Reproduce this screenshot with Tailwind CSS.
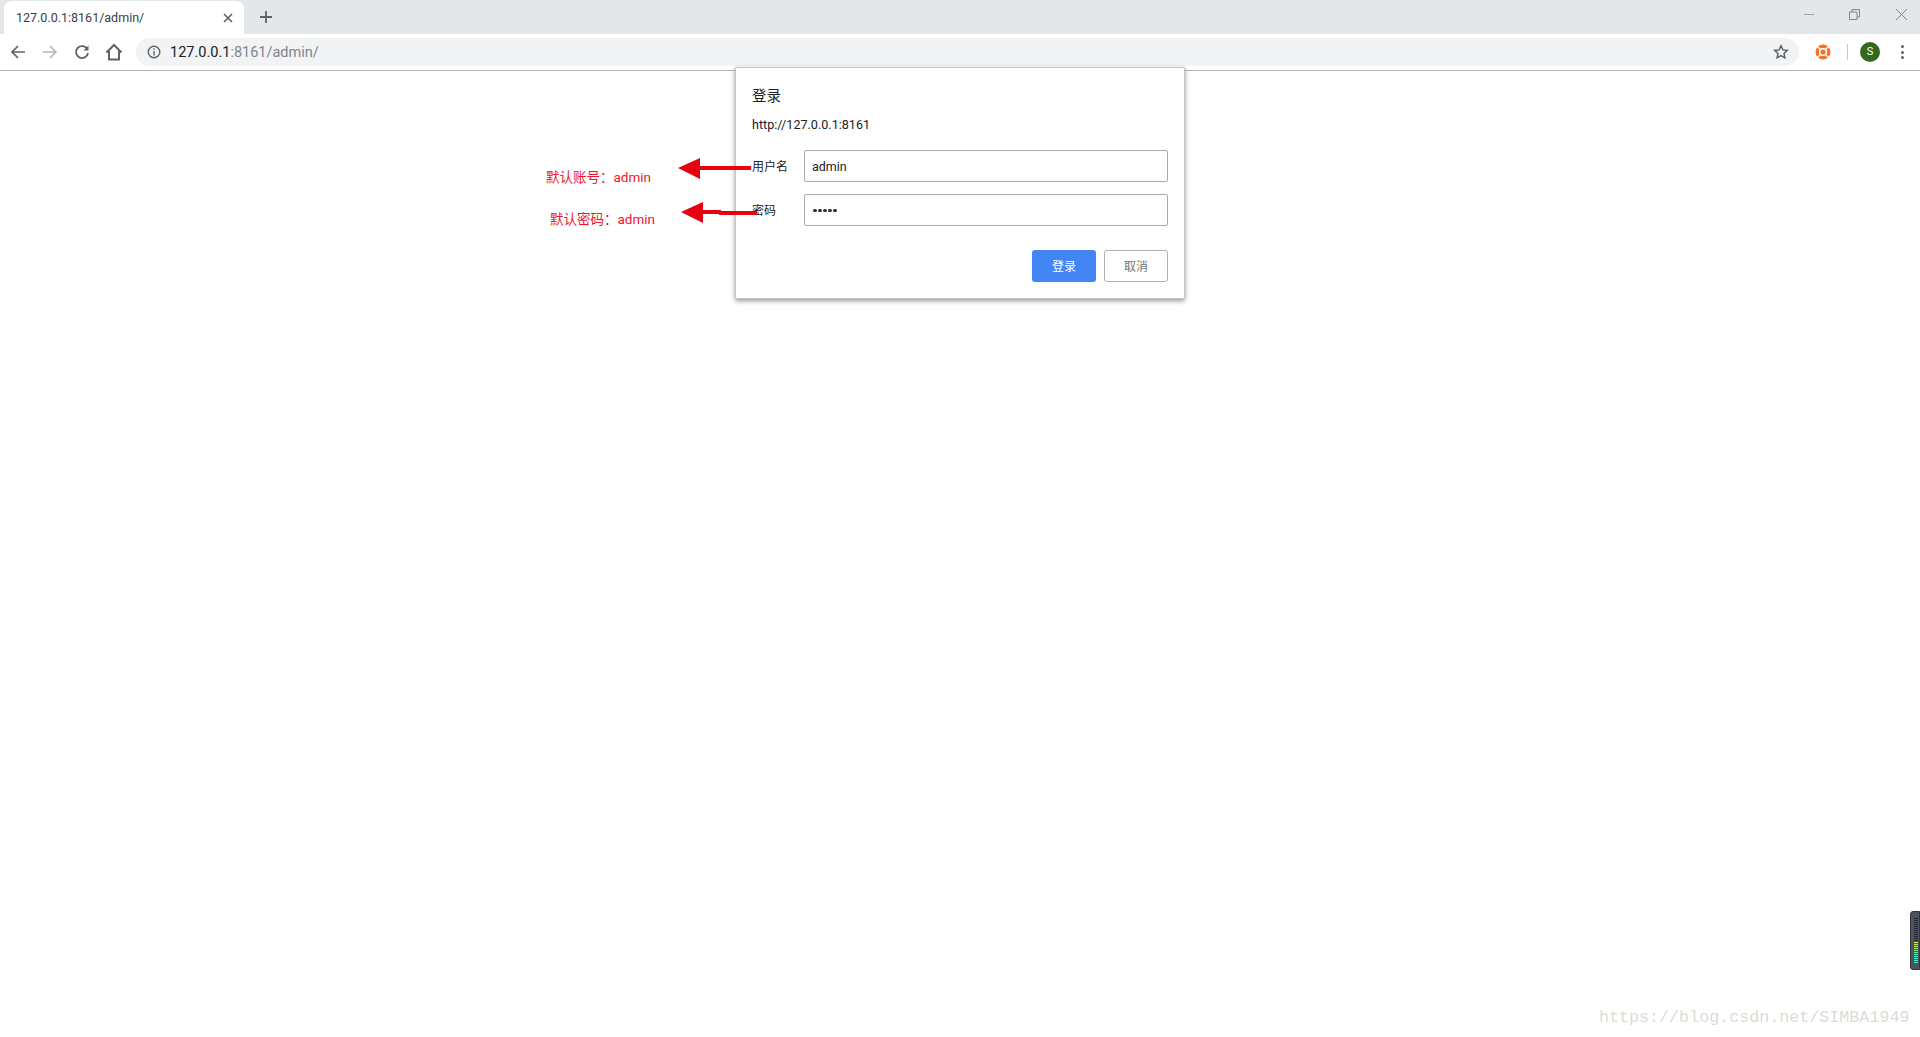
<!DOCTYPE html>
<html lang="zh">
<head>
  <meta charset="UTF-8" />
  <title>127.0.0.1:8161/admin/</title>
  <script src="https://cdn.jsdelivr.net/npm/@tailwindcss/browser@4"></script>
</head>
<body class="relative h-[1037px] w-[1920px] overflow-hidden bg-white font-['Roboto','Noto_Sans_CJK_SC',sans-serif] text-[12px] text-[#202124]">

  <!-- tab strip -->
  <div class="flex h-[34px] items-end bg-[#e4e7ea] pl-[4px]">
    <div class="flex h-[33px] w-[240px] items-center rounded-t-[8px] bg-white pl-[12px] pr-[10px]">
      <span class="flex-1 pt-[1px] text-[12.500px] text-[#3c4043]">127.0.0.1:8161/admin/</span>
      <svg class="h-[12px] w-[12px]" viewBox="0 0 12 12" fill="none" stroke="#5f6368" stroke-width="1.6"><path d="M2 2l8 8M10 2l-8 8"/></svg>
    </div>
    <svg class="mb-[10px] ml-[15px] h-[14px] w-[14px]" viewBox="0 0 14 14" fill="none" stroke="#5f6368" stroke-width="1.8"><path d="M7 1v12M1 7h12"/></svg>
    <div class="ml-auto flex h-[34px] items-start">
      <svg class="mt-[10px] mr-[34px] h-[10px] w-[12px]" viewBox="0 0 12 10" fill="none" stroke="#9aa0a6"><path d="M1 4.5h10"/></svg>
      <svg class="mt-[9px] mr-[35px] h-[11px] w-[11px]" viewBox="0 0 11 11" fill="none" stroke="#80868b"><path d="M.5 3h7.500v7.500h-7.500zM3 3V.5h7.500V8H8"/></svg>
      <svg class="mt-[8px] mr-[12px] h-[13px] w-[13px]" viewBox="0 0 13 13" fill="none" stroke="#80868b"><path d="M1 1l11 11M12 1L1 12"/></svg>
    </div>
  </div>

  <!-- toolbar -->
  <div class="flex h-[37px] items-center border-b border-[#b4b4b4] bg-white">
    <div class="flex w-[136px] items-center">
      <svg class="ml-[10px] h-[16px] w-[16px]" viewBox="0 0 16 16" fill="none" stroke="#5f6368" stroke-width="1.7"><path d="M15 8H2M8 2L2 8l6 6"/></svg>
      <svg class="ml-[16px] h-[16px] w-[16px]" viewBox="0 0 16 16" fill="none" stroke="#b5b7ba" stroke-width="1.7"><path d="M1 8h13M8 2l6 6-6 6"/></svg>
      <svg class="ml-[16px] h-[16px] w-[16px]" viewBox="0 0 16 16" fill="none" stroke="#5f6368" stroke-width="1.800"><path d="M13.500 5.500A6 6 0 1 0 14 9"/><path d="M14.500 1.500v5h-5" fill="#5f6368" stroke="none"/></svg>
      <svg class="ml-[15px] h-[18px] w-[18px]" viewBox="0 0 18 18" fill="none" stroke="#5f6368" stroke-width="2"><path d="M1.500 9.500L9 2l7.500 7.500M4 8v8.500h10V8"/></svg>
    </div>
    <div class="flex h-[28px] w-[1663px] items-center rounded-full bg-[#f1f3f4] pl-[11px] pr-[10px]">
      <svg class="h-[14px] w-[14px]" viewBox="0 0 14 14" fill="none" stroke="#5f6368" stroke-width="1.400"><circle cx="7" cy="7" r="5.800"/><path d="M7 6v4.500M7 3.200v1.600"/></svg>
      <span class="ml-[9px] flex-1 pt-[1px] text-[14.500px] text-[#80868b]"><span class="text-[#202124]">127.0.0.1</span>:8161/admin/</span>
      <svg class="h-[16px] w-[16px]" viewBox="0 0 16 16" fill="none" stroke="#5f6368" stroke-width="1.500"><path d="M8 1.800l1.900 4.100 4.400.5-3.300 3 .9 4.400L8 11.600l-3.900 2.200.9-4.400-3.300-3 4.400-.5z"/></svg>
    </div>
    <svg class="ml-[16px] h-[16px] w-[16px]" viewBox="0 0 16 16"><circle cx="8" cy="8" r="7.500" fill="#f57224"/><circle cx="8" cy="8" r="3.300" fill="none" stroke="#fff" stroke-width="1.500"/><path d="M2.500 2.500l3 3M13.500 2.500l-3 3M2.500 13.500l3-3M13.500 13.500l-3-3" stroke="#fff" stroke-width="1.400"/></svg>
    <div class="ml-[16px] h-[16px] w-px bg-[#c4c7ca]"></div>
    <div class="ml-[12px] flex h-[20px] w-[20px] items-center justify-center rounded-full bg-[#33691e] text-[11px] text-white">S</div>
    <div class="ml-[21px] flex flex-col gap-[2.500px]">
      <div class="h-[3px] w-[3px] rounded-full bg-[#5f6368]"></div>
      <div class="h-[3px] w-[3px] rounded-full bg-[#5f6368]"></div>
      <div class="h-[3px] w-[3px] rounded-full bg-[#5f6368]"></div>
    </div>
  </div>

  <!-- login dialog -->
  <div class="absolute left-[735px] top-[67px] flex h-[232px] w-[450px] flex-col rounded-[2px] border border-[#c4c4c4] bg-white pl-[16px] pr-[16px] shadow-[0_2px_5px_rgba(0,0,0,0.4)]">
    <div class="mt-[19px] text-[14.500px] leading-[20px]">登录</div>
    <div class="mt-[8px] text-[12.600px] leading-[20px]">http://127.0.0.1:8161</div>
    <div class="mt-[15px] flex h-[32px] items-center">
      <span class="mt-[1px] w-[52px]">用户名</span>
      <div class="flex h-[32px] flex-1 items-center rounded-[2px] border border-[#a9a9a9] pt-[2px] px-[7px] text-[12.500px]">admin</div>
    </div>
    <div class="mt-[12px] flex h-[32px] items-center">
      <span class="mt-[1px] w-[52px]">密码</span>
      <div class="flex h-[32px] flex-1 items-center gap-[1.500px] rounded-[2px] border border-[#a9a9a9] pt-[1px] px-[8px]">
        <i class="h-[3.500px] w-[3.500px] rounded-full bg-[#303134]"></i><i class="h-[3.500px] w-[3.500px] rounded-full bg-[#303134]"></i><i class="h-[3.500px] w-[3.500px] rounded-full bg-[#303134]"></i><i class="h-[3.500px] w-[3.500px] rounded-full bg-[#303134]"></i><i class="h-[3.500px] w-[3.500px] rounded-full bg-[#303134]"></i>
      </div>
    </div>
    <div class="mt-[24px] flex justify-end gap-[8px]">
      <div class="flex h-[32px] w-[64px] items-center justify-center rounded-[3px] bg-[#4285f4] pt-[1px] text-white">登录</div>
      <div class="flex h-[32px] w-[64px] items-center justify-center rounded-[3px] border border-[#b0b0b0] pt-[1px] text-[#70757a]">取消</div>
    </div>
  </div>

  <!-- red annotations drawn over the page -->
  <span class="absolute left-[546px] top-[167px] text-[13.500px] leading-[20px] text-[#f0142d]">默认账号：admin</span>
  <span class="absolute left-[550px] top-[209px] text-[13.500px] leading-[20px] text-[#f0142d]">默认密码：admin</span>
  <svg class="absolute left-[676px] top-[156px]" width="82" height="70" viewBox="0 0 82 70" fill="#e60012">
    <path d="M2 12L24 2v21z"/><rect x="22" y="10" width="53" height="4"/>
    <path d="M5 56l22-10v21z"/><rect x="25" y="54" width="20" height="4"/><rect x="43" y="55" width="38" height="4"/>
  </svg>

  <!-- side widget -->
  <div class="absolute right-0 top-[911px] flex h-[59px] w-[10px] flex-col gap-[1px] rounded-l-[3px] border border-[#30343c] bg-[#4d5260] py-[6px] pl-[3px]">
    <i class="h-px w-[4px] bg-[#23262c]"></i><i class="h-px w-[4px] bg-[#23262c]"></i><i class="h-px w-[4px] bg-[#23262c]"></i><i class="h-px w-[4px] bg-[#23262c]"></i><i class="h-px w-[4px] bg-[#23262c]"></i><i class="h-px w-[4px] bg-[#23262c]"></i><i class="h-px w-[4px] bg-[#23262c]"></i><i class="h-px w-[4px] bg-[#23262c]"></i><i class="h-px w-[4px] bg-[#23262c]"></i><i class="h-px w-[4px] bg-[#23262c]"></i><i class="h-px w-[4px] bg-[#23262c]"></i><i class="h-px w-[4px] bg-[#23262c]"></i>
    <i class="h-px w-[4px] bg-[#e4ee4a]"></i><i class="h-px w-[4px] bg-[#d8e84a]"></i><i class="h-px w-[4px] bg-[#c0ec60]"></i><i class="h-px w-[4px] bg-[#a0ee80]"></i><i class="h-px w-[4px] bg-[#88ee90]"></i><i class="h-px w-[4px] bg-[#70eea0]"></i><i class="h-px w-[4px] bg-[#50eeb0]"></i><i class="h-px w-[4px] bg-[#40eec0]"></i><i class="h-px w-[4px] bg-[#40eec0]"></i><i class="h-px w-[4px] bg-[#40eec0]"></i><i class="h-px w-[4px] bg-[#40eec0]"></i>
  </div>

  <!-- watermark -->
  <span class="absolute left-[1599px] top-[1007px] font-['Liberation_Mono','DejaVu_Sans_Mono',monospace] text-[16.700px] leading-[22px] text-[#dcdcd6]">https://blog.csdn.net/SIMBA1949</span>
</body>
</html>
